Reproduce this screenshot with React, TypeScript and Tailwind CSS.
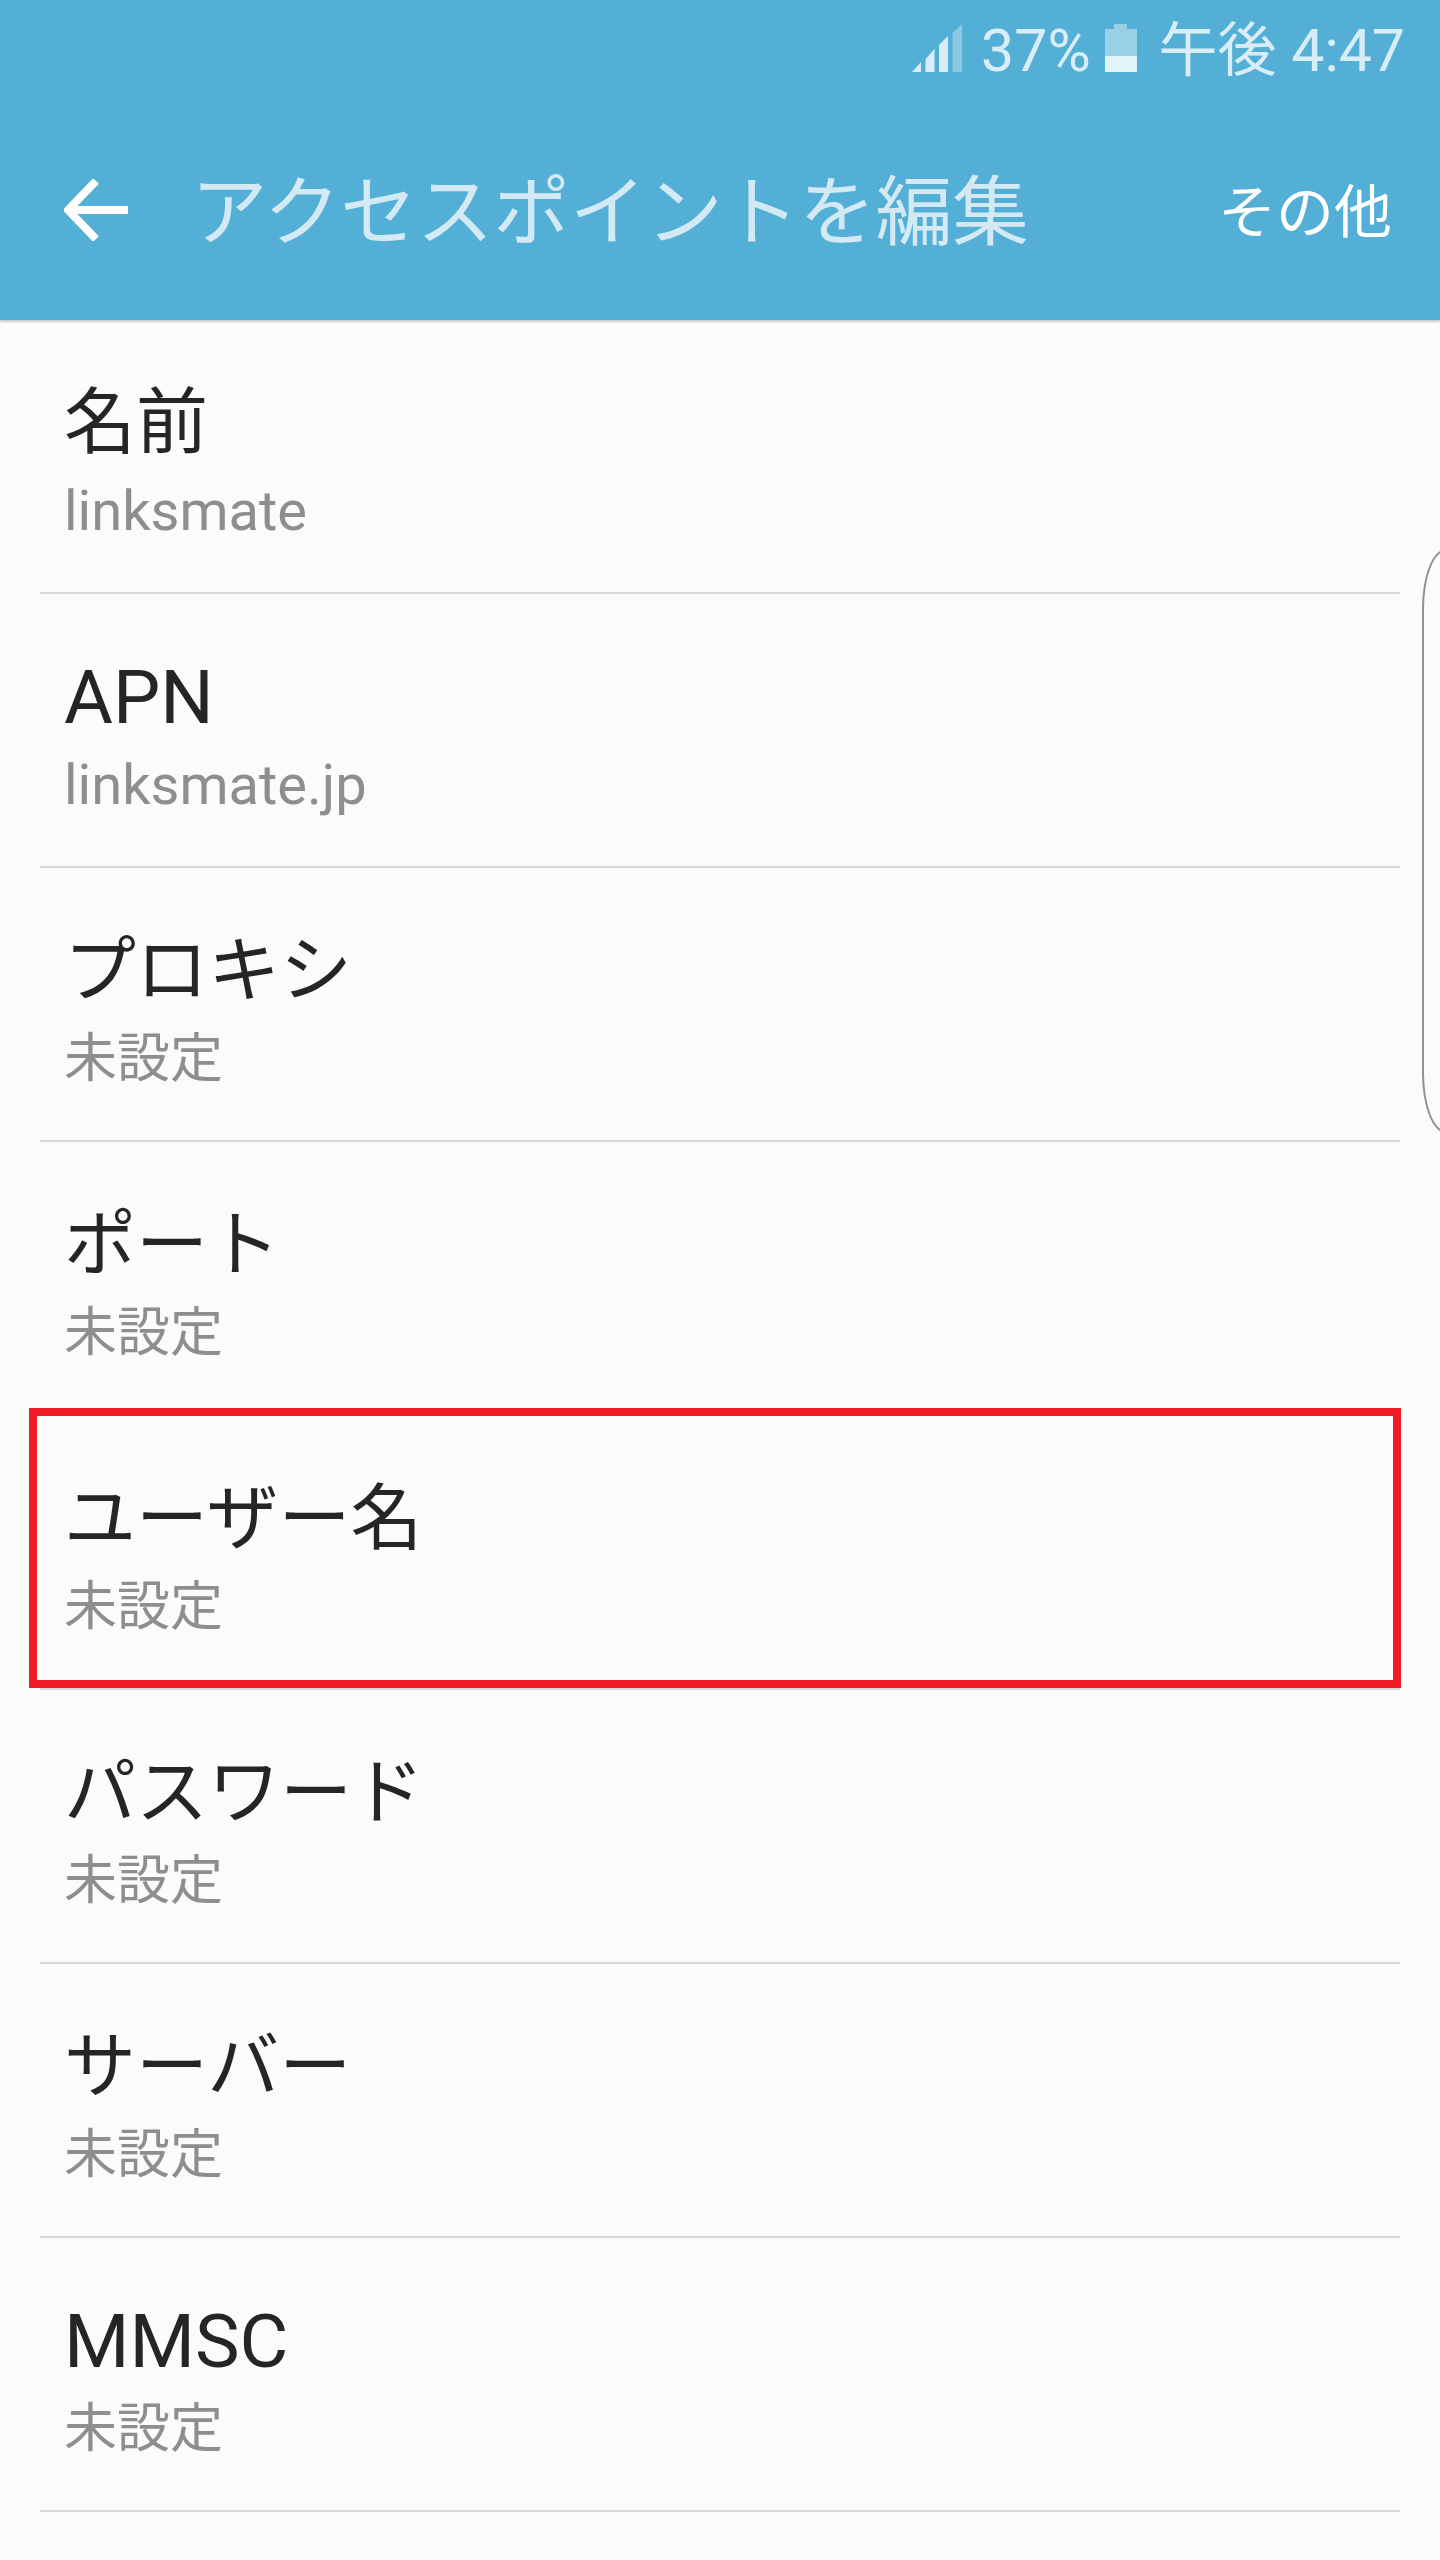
const rows = [
  { title: "名前", value: "linksmate", latinValue: true },
  { title: "APN", value: "linksmate.jp", latinTitle: true, latinValue: true },
  { title: "プロキシ", value: "未設定" },
  { title: "ポート", value: "未設定" },
  { title: "ユーザー名", value: "未設定" },
  { title: "パスワード", value: "未設定" },
  { title: "サーバー", value: "未設定" },
  { title: "MMSC", value: "未設定", latinTitle: true },
];

function SignalIcon() {
  return (
    <svg width="50" height="48" viewBox="0 0 50 48" className="shrink-0">
      <path d="M0 48L9 38V48z" fill="#d8edf6" />
      <path d="M13.500 48V35L22.500 25V48z" fill="#d8edf6" />
      <path d="M27 48V21L36 12V48z" fill="#d8edf6" />
      <path d="M40.500 48V9L50 0V48z" fill="#8ac8e3" />
    </svg>
  );
}

function BatteryIcon() {
  return (
    <div className="flex flex-col items-center w-[32px] h-[48px] shrink-0">
      <div className="w-[13px] h-[5px] bg-[#98d0e6]" />
      <div className="w-full flex-1 bg-[#98d0e6] flex flex-col justify-end">
        <div className="h-[16px] bg-[#e3f3fa]" />
      </div>
    </div>
  );
}

function BackArrow() {
  return (
    <svg width="64" height="62" viewBox="0 0 64 62" className="shrink-0">
      <path d="M64 31H4M32 2L4 31l28 29" fill="none" stroke="#fff" strokeWidth="8" />
    </svg>
  );
}

export default function App() {
  return (
    <div className="w-[1440px] h-[2560px] bg-[#fbfbfb] overflow-hidden relative font-['Roboto','Noto_Sans_CJK_JP',sans-serif]">
      <div className="relative h-[320px] bg-[#53afd6] flex flex-col shadow-[0_2px_2px_rgba(0,0,0,0.2)]">
        <div className="h-[100px] pb-[4px] flex items-center justify-end pr-[35px] text-[#d8edf6] text-[59px]">
          <SignalIcon />
          <span className="ml-[19px] mt-[6px]">37%</span>
          <div className="ml-[14px]">
            <BatteryIcon />
          </div>
          <span className="ml-[22px] mt-[6px]">午後 4:47</span>
        </div>
        <div className="flex-1 flex items-center pl-[64px] pr-[48px]">
          <BackArrow />
          <div className="flex-1 flex items-center pt-[6px]">
            <span className="ml-[63px] text-[76.500px] text-[#d3e9f4]">アクセスポイントを編集</span>
            <span className="ml-auto text-[58px] text-white">その他</span>
          </div>
        </div>
      </div>

      <div className="px-[40px]">
        {rows.map((r) => (
          <div key={r.title} className="h-[274px] pt-[11px] pl-[24px] border-b-2 border-[#d8d8d8] flex flex-col justify-center">
            <div className={`leading-[90px] text-[#252525] ${r.latinTitle ? "text-[75px]" : "text-[72px]"}`}>{r.title}</div>
            <div className={`mt-[9px] leading-[68px] text-[#8c8e90] ${r.latinValue ? "text-[56px]" : "text-[53px]"}`}>{r.value}</div>
          </div>
        ))}
      </div>

      {/* Annotation box over the user name row */}
      <div className="absolute left-[29px] top-[1408px] w-[1372px] h-[280px] border-[8px] border-[#ee1c25]" />

      {/* Edge panel handle */}
      <div className="absolute left-[1422px] top-[549px] w-[30px] h-[584px] border-2 border-[#909090] rounded-tl-[24px_60px] rounded-bl-[24px_60px]" />
    </div>
  );
}
